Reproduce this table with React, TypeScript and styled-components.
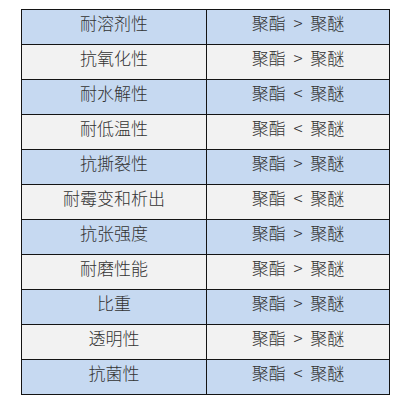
import styled, { createGlobalStyle } from "styled-components";

const GlobalStyle = createGlobalStyle`
  body {
    margin: 0;
    background: #fff;
    font-family: "Noto Sans CJK SC", "Noto Sans", sans-serif;
  }
`;

const Page = styled.div`
  padding: 9px 0 0 21px;
`;

const Table = styled.table`
  width: 369px;
  border-collapse: collapse;
  table-layout: fixed;
`;

const Row = styled.tr<{ $shade: "blue" | "gray" }>`
  background: ${({ $shade }) => ($shade === "blue" ? "#c6d9f1" : "#f2f2f2")};
`;

const Cell = styled.td`
  height: 31px;
  padding: 3px 0 0;
  border: 1px solid #141414;
  vertical-align: top;
  text-align: center;
  font-size: 17px;
  line-height: 19px;
  color: #333;
  font-weight: 300;
`;

const Sign = styled.span`
  padding: 0 4px;
`;

const rows: [string, string][] = [
  ["耐溶剂性", ">"],
  ["抗氧化性", ">"],
  ["耐水解性", "<"],
  ["耐低温性", "<"],
  ["抗撕裂性", ">"],
  ["耐霉变和析出", "<"],
  ["抗张强度", ">"],
  ["耐磨性能", ">"],
  ["比重", ">"],
  ["透明性", ">"],
  ["抗菌性", "<"],
];

export default function App() {
  return (
    <Page>
      <GlobalStyle />
      <Table>
        <colgroup>
          <col style={{ width: 185 }} />
          <col />
        </colgroup>
        <tbody>
          {rows.map(([name, sign], i) => (
            <Row key={name} $shade={i % 2 === 0 ? "blue" : "gray"}>
              <Cell>{name}</Cell>
              <Cell>
                聚酯 <Sign>{sign}</Sign> 聚醚
              </Cell>
            </Row>
          ))}
        </tbody>
      </Table>
    </Page>
  );
}
